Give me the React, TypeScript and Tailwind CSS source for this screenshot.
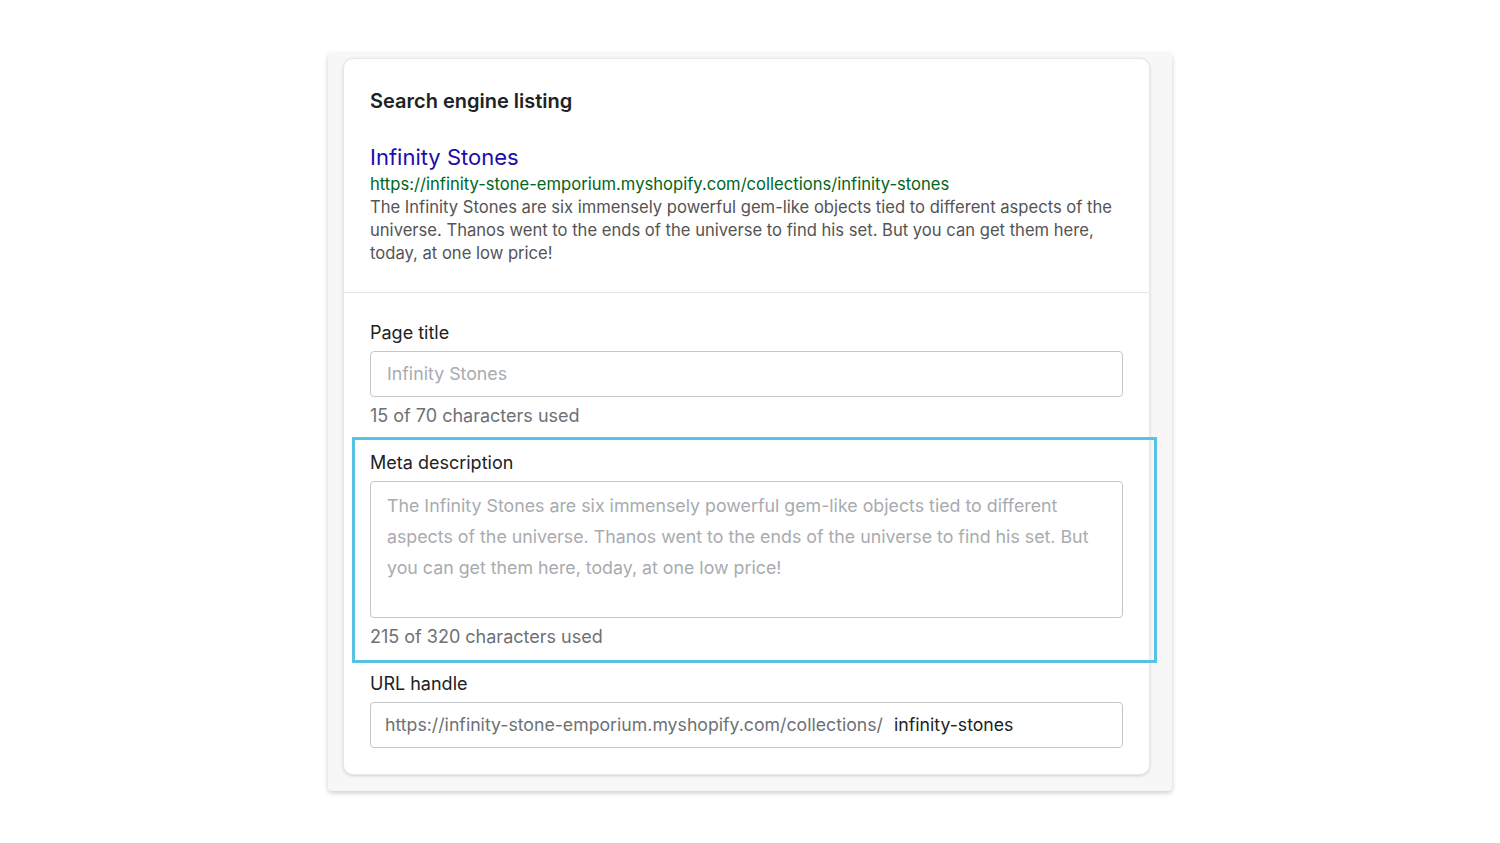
import React from 'react';

const description =
  'The Infinity Stones are six immensely powerful gem-like objects tied to different aspects of the universe. Thanos went to the ends of the universe to find his set. But you can get them here, today, at one low price!';

const storeUrl = 'https://infinity-stone-emporium.myshopify.com/collections/';

function Field({ label, children, help }: { label: string; children: React.ReactNode; help?: string }) {
  return (
    <div>
      <div className="text-[18px] leading-[24px] text-[#202223]">{label}</div>
      <div className="mt-[6px]">{children}</div>
      {help && <div className="mt-[7px] text-[18px] leading-[24px] text-[#6d7175]">{help}</div>}
    </div>
  );
}

export default function App() {
  return (
    <div className="min-h-screen bg-white pt-[53px] font-['Inter',sans-serif]">
      <div className="mx-auto w-[844px] rounded-[4px] bg-[#f7f7f7] pl-[15px] pr-[22px] pt-[5px] pb-[16px] shadow-[0_2px_5px_rgba(0,0,0,0.2)]">
        <div className="rounded-[10px] border border-[#e8e8e8] bg-white shadow-[0_1px_3px_rgba(0,0,0,0.15)]">
          {/* preview */}
          <div className="px-[26px] pt-[28px] pb-[27px]">
            <h2 className="text-[20px] font-semibold leading-[28px] text-[#202223]">Search engine listing</h2>
            <div className="mt-[27px] text-[22px] leading-[30px] text-[#1a0dab]">Infinity Stones</div>
            <div className="text-[16.6px] leading-[24px] text-[#006621]">
              https://infinity-stone-emporium.myshopify.com/collections/infinity-stones
            </div>
            <p className="text-[16.6px] leading-[23px] text-[#545454]">{description}</p>
          </div>

          <div className="border-t border-[#e1e3e5] px-[26px] pt-[28px] pb-[26px]">
            <Field label="Page title" help="15 of 70 characters used">
              <div className="flex h-[46px] items-center rounded-[4px] border border-[#c4c7ca] px-[16px] text-[17.8px] text-[#a8abaf]">
                Infinity Stones
              </div>
            </Field>

            <div className="relative mt-[23px]">
              <div className="pointer-events-none absolute -left-[18px] -right-[34px] -top-[14px] -bottom-[14px] border-[3px] border-[#58c2e2]" />
              <Field label="Meta description" help="215 of 320 characters used">
                <div className="h-[137px] rounded-[4px] border border-[#c4c7ca] px-[16px] pt-[8px] text-[17.8px] leading-[31px] text-[#a8abaf]">
                  {description}
                </div>
              </Field>
            </div>

            <div className="mt-[23px]">
              <Field label="URL handle">
                <div className="flex h-[46px] items-center rounded-[4px] border border-[#c4c7ca] px-[14px] text-[17.7px]">
                  <span className="text-[#6d7175]">{storeUrl}</span>
                  <span className="ml-[11px] text-[#202223]">infinity-stones</span>
                </div>
              </Field>
            </div>
          </div>
        </div>
      </div>
    </div>
  );
}
